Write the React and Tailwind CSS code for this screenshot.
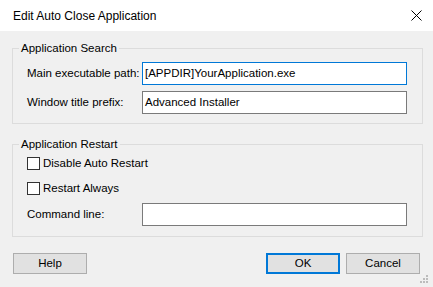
export default function App() {
  return (
    <div
      className="relative w-[433px] h-[287px] overflow-hidden bg-[#f0f0f0] text-[11.5px] text-black whitespace-nowrap"
      style={{ fontFamily: '"Liberation Sans", Arial, sans-serif' }}
    >
      {/* title bar */}
      <div className="h-[31px] bg-white flex items-center justify-between pl-[13px] pr-[11px]">
        <span className="text-[12px] leading-[16px]">Edit Auto Close Application</span>
        <svg width="11" height="11" viewBox="0 0 11 11" className="block">
          <path d="M0.5 0.5 L10.5 10.5 M10.5 0.5 L0.5 10.5" stroke="#000" strokeWidth="1" fill="none" />
        </svg>
      </div>

      {/* Application Search */}
      <fieldset className="mt-[9px] ml-[12px] w-[411px] border border-[#dcdcdc] p-0 m-0">
        <legend className="ml-[6px] px-[2px] leading-[16px]">Application Search</legend>
        <div className="pl-[14px] pt-[6px] pb-[9px] flex flex-col gap-[6px]">
          <div className="flex items-center">
            <span className="w-[115px] shrink-0">Main executable path:</span>
            <div className="w-[265px] h-[23px] shrink-0 border border-[#0078d7] bg-white flex items-center pl-[2px]">
              [APPDIR]YourApplication.exe
            </div>
          </div>
          <div className="flex items-center">
            <span className="w-[115px] shrink-0">Window title prefix:</span>
            <div className="w-[265px] h-[23px] shrink-0 border border-[#7a7a7a] bg-white flex items-center pl-[2px]">
              Advanced Installer
            </div>
          </div>
        </div>
      </fieldset>

      {/* Application Restart */}
      <fieldset className="mt-[12px] ml-[12px] w-[411px] border border-[#dcdcdc] p-0">
        <legend className="ml-[6px] px-[2px] leading-[16px]">Application Restart</legend>
        <div className="pl-[14px] pt-[3px] pb-[10px] flex flex-col">
          <label className="flex items-center h-[17px] gap-[3px]">
            <span className="w-[13px] h-[13px] shrink-0 border border-[#333333] bg-white" />
            Disable Auto Restart
          </label>
          <label className="flex items-center h-[17px] gap-[3px] mt-[8px]">
            <span className="w-[13px] h-[13px] shrink-0 border border-[#333333] bg-white" />
            Restart Always
          </label>
          <div className="flex items-center mt-[6px]">
            <span className="w-[115px] shrink-0">Command line:</span>
            <div className="w-[265px] h-[23px] shrink-0 border border-[#7a7a7a] bg-white" />
          </div>
        </div>
      </fieldset>

      {/* buttons */}
      <div className="mt-[16px] px-[13px] flex justify-between">
        <div className="w-[74px] h-[21px] bg-[#e1e1e1] border border-[#adadad] flex items-center justify-center">
          Help
        </div>
        <div className="flex gap-[6px]">
          <div className="w-[74px] h-[21px] bg-[#e1e1e1] border-2 border-[#0078d7] flex items-center justify-center">
            OK
          </div>
          <div className="w-[74px] h-[21px] bg-[#e1e1e1] border border-[#adadad] flex items-center justify-center">
            Cancel
          </div>
        </div>
      </div>

      {/* size grip */}
      <svg width="8" height="8" viewBox="0 0 8 8" className="absolute right-[5px] bottom-[4px]">
        <g fill="#bcbcbc">
          <rect x="6" y="0" width="2" height="2" />
          <rect x="3" y="3" width="2" height="2" />
          <rect x="6" y="3" width="2" height="2" />
          <rect x="0" y="6" width="2" height="2" />
          <rect x="3" y="6" width="2" height="2" />
          <rect x="6" y="6" width="2" height="2" />
        </g>
      </svg>
    </div>
  );
}
